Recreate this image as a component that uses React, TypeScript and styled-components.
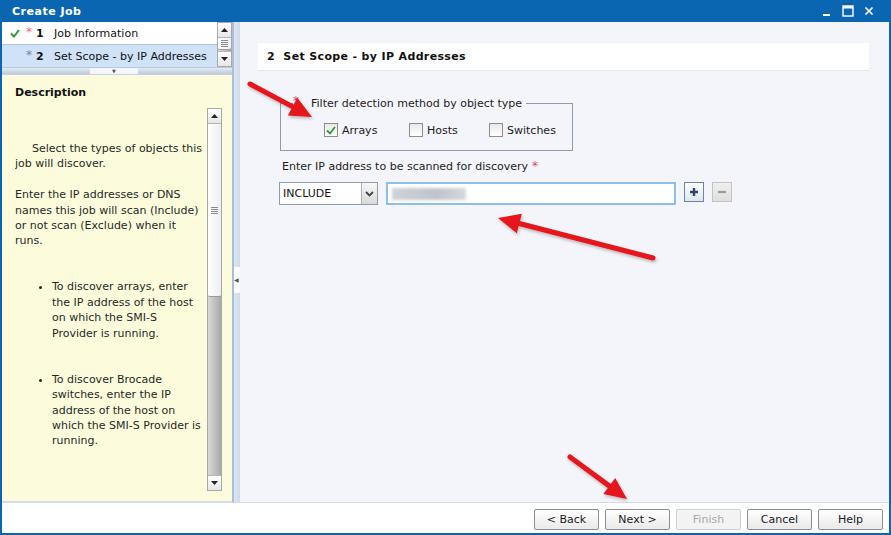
import styled, { createGlobalStyle } from "styled-components";

const GlobalStyle = createGlobalStyle`
  html, body { margin: 0; padding: 0; background: #fff; }
  body {
    font-family: "DejaVu Sans", Verdana, sans-serif;
    font-size: 11px;
    color: #1c1c1c;
  }
  * { box-sizing: border-box; }
`;

const Window = styled.div`
  position: relative;
  width: 891px;
  height: 535px;
  display: flex;
  flex-direction: column;
  background: #0b66b2;
  padding: 0 2px 2px 2px;
`;

const TitleBar = styled.div`
  height: 22px;
  flex: none;
  display: flex;
  align-items: center;
  padding: 0 10px 0 10px;
  color: #fff;
  font-weight: bold;
  letter-spacing: 0.5px;
`;

const Title = styled.div`
  flex: 1;
`;

const WinControls = styled.div`
  display: flex;
  align-items: center;
  gap: 10px;
  margin-right: 5px;
`;

const Body = styled.div`
  flex: 1;
  display: flex;
  min-height: 0;
  background: #fff;
`;

const LeftPane = styled.div`
  width: 230px;
  flex: none;
  display: flex;
  flex-direction: column;
`;

const StepList = styled.div`
  height: 45px;
  display: flex;
  background: #fff;
`;

const StepRows = styled.div`
  flex: 1;
  display: flex;
  flex-direction: column;
`;

const StepRow = styled.div<{ $active?: boolean }>`
  height: ${(p) => (p.$active ? "23px" : "22px")};
  display: flex;
  align-items: center;
  padding-left: 6px;
  background: ${(p) => (p.$active ? "#cfe2f7" : "#fff")};
  border-top: ${(p) => (p.$active ? "1px solid #aec6e2" : "none")};
  color: #111;
`;

const Check = styled.span`
  width: 13px;
  display: inline-flex;
  justify-content: center;
`;

const Star = styled.span<{ $color: string }>`
  width: 13px;
  padding-left: 5px;
  color: ${(p) => p.$color};
  font-size: 12px;
  position: relative;
  top: -1px;
`;

const StepNum = styled.span`
  font-weight: bold;
  width: 20px;
  padding-left: 2px;
`;

const ScrollBar = styled.div`
  width: 15px;
  flex: none;
  display: flex;
  flex-direction: column;
  border: 1px solid #a9a9a9;
  background: linear-gradient(to right, #d9d9d9, #a9a9a9);
`;

const ScrollBtn = styled.div`
  height: 15px;
  flex: none;
  display: flex;
  align-items: center;
  justify-content: center;
  background: linear-gradient(#ffffff, #e6e6e6);
  border-bottom: 1px solid #b5b5b5;
  &:last-child {
    border-bottom: none;
    border-top: 1px solid #b5b5b5;
  }
`;

const Thumb = styled.div<{ $size: number }>`
  height: ${(p) => p.$size}px;
  flex: none;
  display: flex;
  align-items: center;
  justify-content: center;
  background: linear-gradient(to right, #ffffff, #eceef0);
  border-bottom: 1px solid #9a9a9a;
  border-radius: 0 0 2px 2px;
`;

const Track = styled.div`
  flex: 1;
`;

const Grip = styled.div`
  width: 7px;
  height: 7px;
  background: repeating-linear-gradient(#8a8a8a 0 1px, transparent 1px 2px);
`;

const HandleBar = styled.div`
  height: 8px;
  flex: none;
  display: flex;
  justify-content: center;
  background: linear-gradient(#e4ebf3, #bccbdd);
  border-top: 1px solid #b9c8da;
  border-bottom: 1px solid #c8d3df;
`;

const HandleGrip = styled.div`
  width: 48px;
  height: 100%;
  display: flex;
  align-items: center;
  justify-content: center;
  background: #f3f6fa;
  color: #556;
  font-size: 5px;
  margin-right: 6px;
`;

const DescPane = styled.div`
  flex: 1;
  background: #fcfcdd;
  display: flex;
  flex-direction: column;
  padding: 0 10px 10px 13px;
  border-bottom: 1px solid #d7dde4;
`;

const DescTitle = styled.div`
  height: 33px;
  flex: none;
  display: flex;
  align-items: center;
  padding-top: 2px;
  font-weight: bold;
  color: #111;
`;

const DescScroll = styled.div`
  flex: 1;
  display: flex;
  min-height: 0;
`;

const DescText = styled.div`
  flex: 1;
  padding: 33px 2px 0 0;
  line-height: 15.4px;
  color: #1f2a1f;
  overflow: hidden;

  & p {
    margin: 0 0 15.4px;
  }
  & p.indent {
    text-indent: 17px;
  }
  & ul {
    margin: 30.6px 0 0;
    padding-left: 37px;
  }
  & li {
    margin-bottom: 30.8px;
  }
`;

const Splitter = styled.div`
  width: 8px;
  flex: none;
  display: flex;
  flex-direction: column;
  justify-content: center;
  border-left: 2px solid #a8bdd7;
  background: linear-gradient(to right, #dde6f1, #cfdae8);
`;

const SplitGrip = styled.div`
  height: 26px;
  background: #fafbfd;
  display: flex;
  align-items: center;
  color: #555;
  font-size: 6px;
  margin-top: 35px;
`;

const RightPane = styled.div`
  flex: 1;
  background: #f4f5fb;
  padding: 21px 20px 0 18px;
  display: flex;
  flex-direction: column;
`;

const StepHeader = styled.div`
  height: 28px;
  display: flex;
  align-items: center;
  padding-left: 9px;
  background: #fff;
  border-bottom: 1px solid #e3e5ee;
  font-weight: bold;
  letter-spacing: 0.35px;
  color: #111;
`;

const Form = styled.div`
  padding-left: 21px;
  display: flex;
  flex-direction: column;
`;

const FilterBox = styled.fieldset`
  width: 293px;
  margin: 25px 0 0 1px;
  padding: 13px 0 13px 43px;
  border: 1px solid #8d9cb2;
  display: flex;
`;

const Legend = styled.legend`
  margin-left: -31px;
  padding: 0 4px 0 0;
  color: #1c1c1c;
`;

const Req = styled.span`
  color: #e2405a;
  font-size: 12px;
  margin-right: 12px;
  position: relative;
  top: -2px;
`;

const CheckItem = styled.label<{ $width: number }>`
  width: ${(p) => p.$width}px;
  display: flex;
  align-items: center;
  gap: 4px;
`;

const Box = styled.span`
  width: 14px;
  height: 14px;
  border: 1px solid #8c8c8c;
  background: linear-gradient(#e9e9e9, #ffffff);
  display: inline-flex;
  align-items: center;
  justify-content: center;
`;

const FieldLabel = styled.div`
  margin-top: 8px;
  padding-left: 3px;
  height: 14px;
  line-height: 14px;
`;

const LabelReq = styled.span`
  color: #e2405a;
  margin-left: 4px;
  font-size: 12px;
`;

const InputRow = styled.div`
  margin-top: 9px;
  display: flex;
  align-items: flex-start;
  gap: 8px;
`;

const Select = styled.div`
  width: 99px;
  height: 23px;
  display: flex;
  border: 1px solid #8f9bab;
  background: #fff;
`;

const SelectValue = styled.div`
  flex: 1;
  display: flex;
  align-items: center;
  padding-left: 3px;
  color: #111;
`;

const SelectBtn = styled.div`
  width: 16px;
  display: flex;
  align-items: center;
  justify-content: center;
  border-left: 1px solid #b0b0b0;
  background: linear-gradient(#f7f7f7, #d9d9d9);
`;

const TextInput = styled.div`
  width: 290px;
  height: 23px;
  border: 2px solid #8cc0e9;
  background: #fff;
  padding: 3px 4px;
  display: flex;
  align-items: center;
`;

const Blurred = styled.span`
  width: 74px;
  height: 12px;
  background: linear-gradient(to right, #cfd3d9, #bfc3ca 60%, #d6d9de);
  filter: blur(1.6px);
`;

const SquareBtn = styled.div<{ $disabled?: boolean }>`
  width: 20px;
  height: 20px;
  display: flex;
  align-items: center;
  justify-content: center;
  border: 1px solid ${(p) => (p.$disabled ? "#c3c3c3" : "#6c83a6")};
  background: ${(p) =>
    p.$disabled ? "linear-gradient(#f0f0f0, #dedede)" : "linear-gradient(#ffffff, #dfe5ef)"};
`;

const Footer = styled.div`
  height: 31px;
  flex: none;
  display: flex;
  justify-content: flex-end;
  align-items: flex-start;
  gap: 6px;
  padding: 6px 6px 0 0;
  background: #fff;
  border-top: 1px solid #d5dbe4;
`;

const Button = styled.button<{ $disabled?: boolean }>`
  width: 65px;
  height: 21px;
  padding: 0;
  font-family: "DejaVu Sans", Verdana, sans-serif;
  font-size: 11px;
  color: ${(p) => (p.$disabled ? "#a9a9a9" : "#1a1a1a")};
  border: 1px solid ${(p) => (p.$disabled ? "#cfcfcf" : "#8e8e8e")};
  border-radius: 2px;
  background: ${(p) =>
    p.$disabled ? "#f3f3f3" : "linear-gradient(#ffffff, #e9e9e9)"};
`;

const Overlay = styled.svg`
  position: absolute;
  left: 0;
  top: 0;
  pointer-events: none;
`;

const Tri = ({ up }: { up?: boolean }) => (
  <svg width="7" height="4" viewBox="0 0 7 4">
    <path d={up ? "M0 4 L3.5 0 L7 4 Z" : "M0 0 L3.5 4 L7 0 Z"} fill="#222" />
  </svg>
);

const Arrow = ({ x1, y1, x2, y2 }: { x1: number; y1: number; x2: number; y2: number }) => {
  const dx = x2 - x1;
  const dy = y2 - y1;
  const len = Math.sqrt(dx * dx + dy * dy);
  const ux = dx / len;
  const uy = dy / len;
  const head = 22;
  const half = 10;
  const bx = x2 - ux * head;
  const by = y2 - uy * head;
  const p1 = `${bx - uy * half},${by + ux * half}`;
  const p2 = `${bx + uy * half},${by - ux * half}`;
  return (
    <g filter="url(#shadow)">
      <line x1={x1} y1={y1} x2={bx + ux * 2} y2={by + uy * 2} stroke="#e5141c" strokeWidth="5" strokeLinecap="round" />
      <polygon points={`${x2},${y2} ${p1} ${p2}`} fill="#e5141c" />
    </g>
  );
};

export default function App() {
  return (
    <>
      <GlobalStyle />
      <Window>
        <TitleBar>
          <Title>Create Job</Title>
          <WinControls>
            <svg width="10" height="12" viewBox="0 0 10 12">
              <rect x="1" y="9" width="7" height="2" fill="#fff" />
            </svg>
            <svg width="12" height="12" viewBox="0 0 12 12">
              <rect x="1" y="1" width="10" height="10" fill="none" stroke="#fff" strokeWidth="1.4" />
              <rect x="1" y="1" width="10" height="2.5" fill="#fff" />
            </svg>
            <svg width="10" height="10" viewBox="0 0 10 10">
              <path d="M1.5 1.5 L8.5 8.5 M8.5 1.5 L1.5 8.5" stroke="#fff" strokeWidth="1.7" />
            </svg>
          </WinControls>
        </TitleBar>

        <Body>
          <LeftPane>
            <StepList>
              <StepRows>
                <StepRow>
                  <Check>
                    <svg width="10" height="9" viewBox="0 0 10 9">
                      <path d="M1 4.5 L4 7.5 L9 1" fill="none" stroke="#2f9a34" strokeWidth="2" />
                    </svg>
                  </Check>
                  <Star $color="#ea6b83">*</Star>
                  <StepNum>1</StepNum>
                  <span>Job Information</span>
                </StepRow>
                <StepRow $active>
                  <Check />
                  <Star $color="#7d8796">*</Star>
                  <StepNum>2</StepNum>
                  <span>Set Scope - by IP Addresses</span>
                </StepRow>
              </StepRows>
              <ScrollBar>
                <ScrollBtn>
                  <Tri up />
                </ScrollBtn>
                <Thumb $size={12}>
                  <Grip />
                </Thumb>
                <Track />
                <ScrollBtn>
                  <Tri />
                </ScrollBtn>
              </ScrollBar>
            </StepList>
            <HandleBar>
              <HandleGrip>▼</HandleGrip>
            </HandleBar>
            <DescPane>
              <DescTitle>Description</DescTitle>
              <DescScroll>
                <DescText>
                  <p className="indent">Select the types of objects this job will discover.</p>
                  <p>
                    Enter the IP addresses or DNS names this job will scan (Include) or not scan
                    (Exclude) when it runs.
                  </p>
                  <ul>
                    <li>To discover arrays, enter the IP address of the host on which the SMI-S Provider is running.</li>
                    <li>
                      To discover Brocade switches, enter the IP address of the host on which the SMI-S
                      Provider is running.
                    </li>
                  </ul>
                </DescText>
                <ScrollBar>
                  <ScrollBtn>
                    <Tri up />
                  </ScrollBtn>
                  <Thumb $size={173}>
                    <Grip />
                  </Thumb>
                  <Track />
                  <ScrollBtn>
                    <Tri />
                  </ScrollBtn>
                </ScrollBar>
              </DescScroll>
            </DescPane>
          </LeftPane>

          <Splitter>
            <SplitGrip>◀</SplitGrip>
          </Splitter>

          <RightPane>
            <StepHeader>2&nbsp;&nbsp;Set Scope - by IP Addresses</StepHeader>
            <Form>
              <FilterBox>
                <Legend>
                  <Req>*</Req>Filter detection method by object type
                </Legend>
                <CheckItem $width={85}>
                  <Box>
                    <svg width="10" height="9" viewBox="0 0 10 9">
                      <path d="M1 4.5 L4 7.5 L9 1" fill="none" stroke="#2f9a34" strokeWidth="1.8" />
                    </svg>
                  </Box>
                  Arrays
                </CheckItem>
                <CheckItem $width={80}>
                  <Box />
                  Hosts
                </CheckItem>
                <CheckItem $width={80}>
                  <Box />
                  Switches
                </CheckItem>
              </FilterBox>

              <FieldLabel>
                Enter IP address to be scanned for discovery<LabelReq>*</LabelReq>
              </FieldLabel>

              <InputRow>
                <Select>
                  <SelectValue>INCLUDE</SelectValue>
                  <SelectBtn>
                    <svg width="9" height="6" viewBox="0 0 9 6">
                      <path d="M1 1 L4.5 4.5 L8 1" fill="none" stroke="#444" strokeWidth="1.8" />
                    </svg>
                  </SelectBtn>
                </Select>
                <TextInput>
                  <Blurred />
                </TextInput>
                <SquareBtn>
                  <svg width="10" height="10" viewBox="0 0 10 10">
                    <path d="M5 1 V9 M1 5 H9" stroke="#2b4672" strokeWidth="2.4" />
                  </svg>
                </SquareBtn>
                <SquareBtn $disabled>
                  <svg width="10" height="10" viewBox="0 0 10 10">
                    <path d="M1 5 H9" stroke="#9b9b9b" strokeWidth="2.2" />
                  </svg>
                </SquareBtn>
              </InputRow>
            </Form>
          </RightPane>
        </Body>

        <Footer>
          <Button>&lt; Back</Button>
          <Button>Next &gt;</Button>
          <Button $disabled>Finish</Button>
          <Button>Cancel</Button>
          <Button>Help</Button>
        </Footer>

        <Overlay width="891" height="535" viewBox="0 0 891 535">
          <defs>
            <filter id="shadow" x="-20%" y="-20%" width="140%" height="140%">
              <feDropShadow dx="1" dy="2" stdDeviation="1.5" floodColor="#000" floodOpacity="0.25" />
            </filter>
          </defs>
          <Arrow x1={250} y1={84} x2={312} y2={117} />
          <Arrow x1={653} y1={258} x2={498} y2={218} />
          <Arrow x1={570} y1={457} x2={627} y2={499} />
        </Overlay>
      </Window>
    </>
  );
}
